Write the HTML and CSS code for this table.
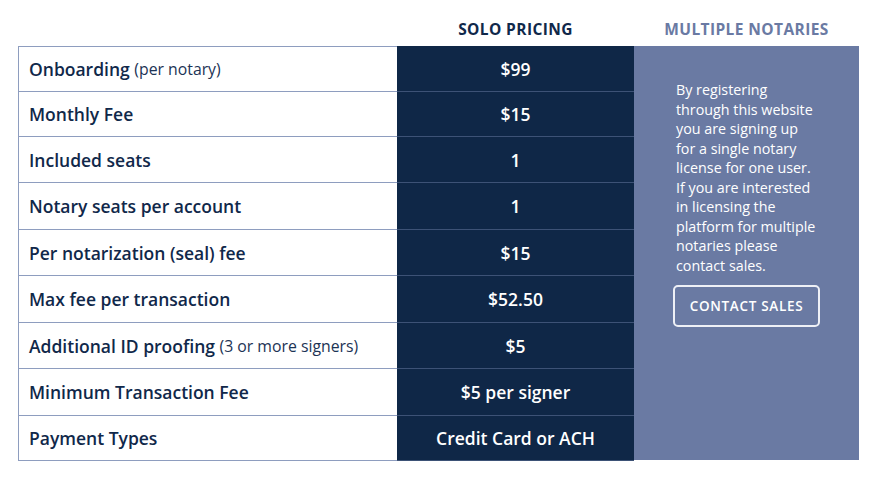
FILE: index.html
```html
<!DOCTYPE html>
<html lang="en">
<head>
<meta charset="utf-8">
<title>Pricing</title>
<link rel="stylesheet" href="styles.css">
</head>
<body>
<div class="pricing">
  <div class="head"></div>
  <div class="head head-solo">SOLO PRICING</div>
  <div class="head head-multi">MULTIPLE NOTARIES</div>

  <div class="label first"><b>Onboarding</b>&nbsp;<span class="note">(per notary)</span></div>
  <div class="value first">$99</div>

  <div class="panel">
    <p class="panel-text">By registering<br>through this website<br>you are signing up<br>for a single notary<br>license for one user.<br>If you are interested<br>in licensing the<br>platform for multiple<br>notaries please<br>contact sales.</p>
    <a class="btn" href="#">CONTACT SALES</a>
  </div>

  <div class="label"><b>Monthly Fee</b></div>
  <div class="value">$15</div>

  <div class="label"><b>Included seats</b></div>
  <div class="value">1</div>

  <div class="label"><b>Notary seats per account</b></div>
  <div class="value">1</div>

  <div class="label"><b>Per notarization (seal) fee</b></div>
  <div class="value">$15</div>

  <div class="label"><b>Max fee per transaction</b></div>
  <div class="value">$52.50</div>

  <div class="label"><b>Additional ID proofing</b>&nbsp;<span class="note">(3 or more signers)</span></div>
  <div class="value">$5</div>

  <div class="label"><b>Minimum Transaction Fee</b></div>
  <div class="value">$5 per signer</div>

  <div class="label"><b>Payment Types</b></div>
  <div class="value">Credit Card or ACH</div>
</div>
</body>
</html>
```

FILE: styles.css
```css
* { box-sizing: border-box; }

body {
  margin: 0;
  background: #ffffff;
  font-family: "Open Sans", "Noto Sans", sans-serif;
  color: #10284a;
}

.pricing {
  display: grid;
  grid-template-columns: 379px 237px 225px;
  grid-template-rows: 46px 46px 45px 46px 47px 46px 47px 46px 47px 45px;
  margin-left: 18px;
  width: 841px;
}

.head {
  display: flex;
  align-items: center;
  justify-content: center;
  font-weight: 700;
  font-size: 15.5px;
  letter-spacing: 0.4px;
  padding-top: 12px;
}

.head-solo { color: #10284a; }
.head-multi { color: #6a7aa3; }

.label {
  display: flex;
  align-items: center;
  padding-left: 10px;
  border-left: 1px solid #8e9dbf;
  border-bottom: 1px solid #8e9dbf;
  font-size: 17.5px;
  color: #10284a;
}

.label b { font-weight: 600; }

.note {
  font-size: 15.8px;
  font-weight: 400;
  color: #1c3355;
}

.value {
  display: flex;
  align-items: center;
  justify-content: center;
  background: #0f2747;
  color: #ffffff;
  font-size: 17.5px;
  font-weight: 600;
  border-bottom: 1px solid #3d5276;
}

.label.first { border-top: 1px solid #8e9dbf; }
.value.first { border-top: 1px solid #0f2747; }

.panel {
  grid-column: 3;
  grid-row: 2 / span 9;
  background: #6a7aa3;
  padding: 34px 0 0 42px;
  margin-bottom: 1px;
}

.panel-text {
  margin: 0;
  font-size: 14.3px;
  line-height: 19.5px;
  color: #ffffff;
  white-space: nowrap;
}

.btn {
  display: flex;
  align-items: center;
  justify-content: center;
  width: 147px;
  height: 42px;
  margin: 10px 0 0 -3px;
  border: 2px solid #eef0f6;
  border-radius: 5px;
  color: #ffffff;
  text-decoration: none;
  font-size: 13.5px;
  font-weight: 600;
  letter-spacing: 0.7px;
}
```
